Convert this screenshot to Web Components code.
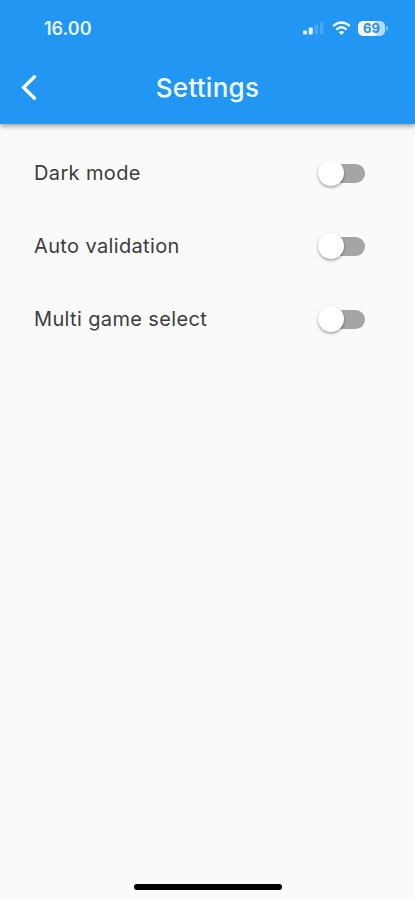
<!DOCTYPE html>
<html lang="en"><head><meta charset="utf-8"><title>Settings</title>
<style>html,body{margin:0;height:100%;background:#fafafa;overflow:hidden}</style></head>
<body>
<settings-screen></settings-screen>
<script>
const define = (name, html) => customElements.define(name, class extends HTMLElement {
  constructor() {
    super();
    const t = document.createElement('template');
    t.innerHTML = html;
    this.attachShadow({ mode: 'open' }).append(t.content.cloneNode(true));
  }
});

define('status-bar', `
<style>
:host{display:flex;justify-content:space-between;align-items:center;height:56px;padding:0 27px 0 44px;box-sizing:border-box}
.time{font-size:18px;font-weight:600;letter-spacing:0;color:#e6f4ff}
.icons{display:flex;align-items:center;height:16px}
.bars{margin-right:8px}.wifi{margin-right:7px}
.battery{display:flex;align-items:center}
.level{width:27px;height:15px;border-radius:5px;background:linear-gradient(90deg,#f4fbff 62%,#b5dcfc 70%);color:#2f8fe0;font-size:13px;font-weight:700;line-height:15px;text-align:center}
.tip{width:2px;height:5px;border-radius:0 2px 2px 0;background:#83c2f8;margin-left:1px}
</style>
<span class="time">16.00</span>
<div class="icons">
<svg class="bars" width="21" height="14" viewBox="0 0 21 14"><g fill="#eaf6ff"><rect x="0" y="9.5" width="4" height="4" rx="1"/><rect x="5.7" y="6.5" width="4" height="7" rx="1"/></g><g fill="#45a7f6"><rect x="11.4" y="3.5" width="3.6" height="10" rx="1"/><rect x="17" y="1" width="3.6" height="12.5" rx="1"/></g></svg>
<svg class="wifi" width="19" height="15" viewBox="0 0 19 15" fill="none" stroke="#effaff" stroke-width="2.4"><path d="M1.2 5.2Q9.5-2 17.8 5.2M4.3 8.7Q9.5 4 14.7 8.7"/><path d="M6.7 11.2Q9.5 8.9 12.3 11.2L9.5 14Z" fill="#effaff" stroke="none"/></svg>
<div class="battery"><div class="level">69</div><div class="tip"></div></div>
</div>`);

define('app-bar', `
<style>
:host{display:block;height:124px;background:#2196f3;color:#f3faff;border-bottom:1px solid #3b95dc;box-sizing:border-box;box-shadow:0 2px 5px rgba(0,0,0,.4)}
nav{display:grid;grid-template-columns:60px 1fr 60px;align-items:center;height:63px}
svg{margin-left:20px;display:block}
h1{margin:0;text-align:center;font-size:26px;font-weight:500;letter-spacing:.25px;line-height:30px}
</style>
<status-bar></status-bar>
<nav><svg width="18" height="28" viewBox="0 0 18 28" fill="none" stroke="#fff" stroke-width="3.3" stroke-linecap="round" stroke-linejoin="miter"><path d="M14.5 2.7 3.5 13.5 14.5 24.3"/></svg><h1><slot></slot></h1></nav>`);

define('toggle-switch', `
<style>
:host{display:flex;align-items:center;width:48px;height:28px}
.track{display:flex;align-items:center;width:40px;height:19px;margin-left:8px;border-radius:10px;background:#a5a5a5}
.thumb{flex:none;width:26.5px;height:26.5px;margin-left:-7.5px;border-radius:50%;background:#fff;box-shadow:0 1.5px 3px rgba(0,0,0,.38)}
</style>
<div class="track"><div class="thumb"></div></div>`);

define('setting-row', `
<style>
:host{display:flex;align-items:center;justify-content:space-between;height:73px}
.label{font-size:20px;letter-spacing:.36px;line-height:28px;color:#3c3c3c}
</style>
<span class="label"><slot></slot></span><toggle-switch></toggle-switch>`);

define('settings-screen', `
<style>
:host{display:flex;flex-direction:column;height:100vh;min-height:900px;background:#fafafa;font-family:Inter,"Liberation Sans",sans-serif}
main{flex:1;padding:12.5px 50px 0 34px}
footer{display:flex;justify-content:center;height:16px}
.home{width:148px;height:6px;border-radius:3px;background:#000}
</style>
<app-bar>Settings</app-bar>
<main><setting-row>Dark mode</setting-row><setting-row>Auto validation</setting-row><setting-row>Multi game select</setting-row></main>
<footer><div class="home"></div></footer>`);
</script>
</body></html>
